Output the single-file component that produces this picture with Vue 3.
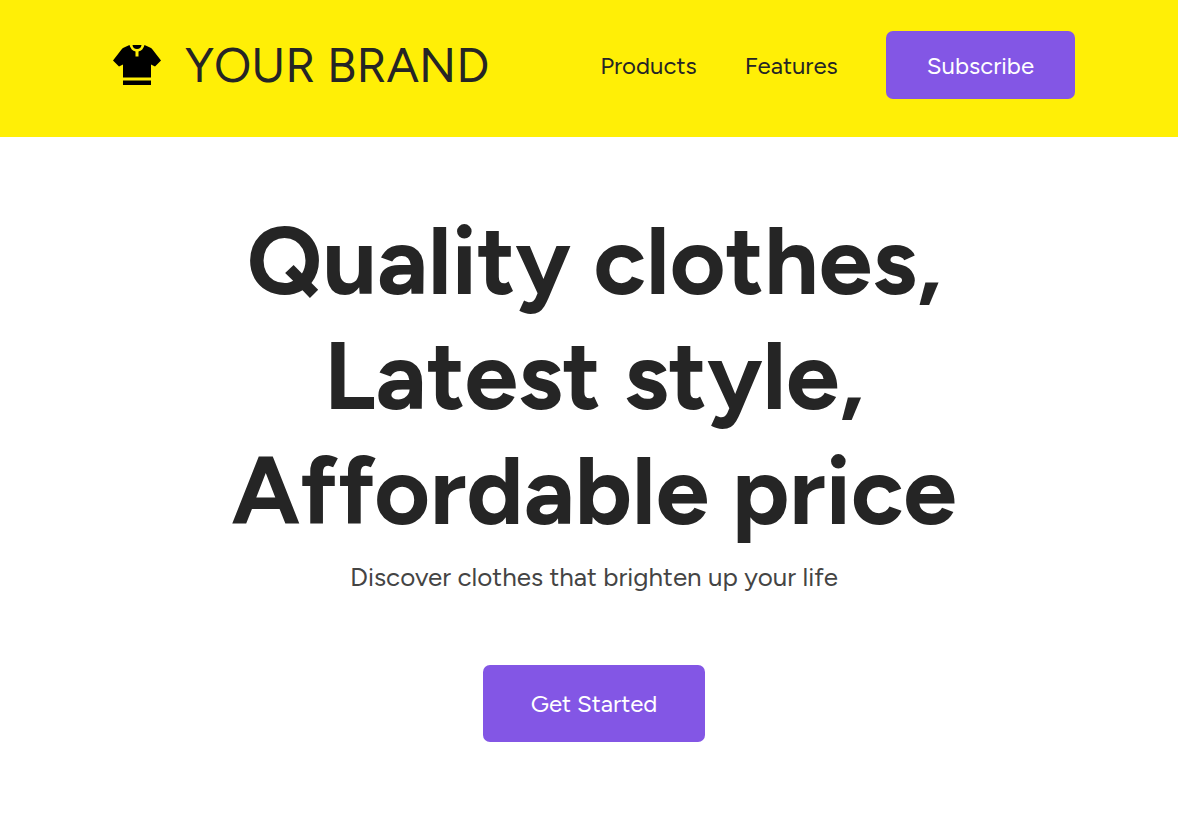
<script setup>
const links = ['Products', 'Features']
const headline = ['Quality clothes,', 'Latest style,', 'Affordable price']
</script>

<template>
  <div class="page">
    <header class="bar">
      <a class="brand" href="#">
        <svg class="logo" viewBox="0 0 48 48" aria-hidden="true">
          <path d="M16.500 4 11 6.500Q9.500 7 8.500 8.500L0 19.500 6 25.500 10 23.500V36.500H38V23.500L42 25.500 48 19.500 39.500 8.500Q38.500 7 37 6.500L31.500 4Q30 9.500 25.500 10.500V15.500H22.500V10.500Q18 9.500 16.500 4Z" />
          <path d="M19.500 4H28.500Q28 8 24 8Q20 8 19.500 4Z" />
          <path d="M10 39.500H38V44H10Z" />
        </svg>
        <span class="name">YOUR BRAND</span>
      </a>
      <nav class="nav">
        <a v-for="link in links" :key="link" href="#">{{ link }}</a>
        <button class="subscribe" type="button">Subscribe</button>
      </nav>
    </header>
    <main class="hero">
      <h1><span v-for="line in headline" :key="line">{{ line }}</span></h1>
      <p>Discover clothes that brighten up your life</p>
      <button class="start" type="button">Get Started</button>
    </main>
  </div>
</template>

<style>
body { margin: 0; background: #fff; }
</style>

<style scoped>
.page { font-family: Figtree, Lato, sans-serif; color: #252525; }
.bar { display: flex; align-items: center; justify-content: space-between; box-sizing: border-box; padding: 31px 103px 38px 113px; background: #ffef06; }
.brand { display: flex; align-items: center; gap: 24px; color: inherit; text-decoration: none; }
.logo { width: 48px; height: 48px; }
.name { font-size: 48px; line-height: 58px; font-weight: 400; white-space: nowrap; }
.nav { display: flex; align-items: center; gap: 48px; }
.nav a { font-size: 24px; line-height: 33px; color: inherit; text-decoration: none; }
button { border: 0; border-radius: 7px; background: #8356e5; color: #fff; font-family: inherit; font-size: 24px; line-height: 33px; white-space: nowrap; cursor: pointer; }
.subscribe { padding: 18px 41px 17px; }
.hero { display: flex; flex-direction: column; align-items: center; padding: 66px 24px 80px 34px; text-align: center; }
h1 { margin: 0; font-size: 96px; line-height: 115px; font-weight: 700; }
h1 span { display: block; }
p { margin: 11px 0 0; font-size: 26px; line-height: 36px; color: #444; }
.start { margin-top: 70px; padding: 22px 48px; }
</style>
